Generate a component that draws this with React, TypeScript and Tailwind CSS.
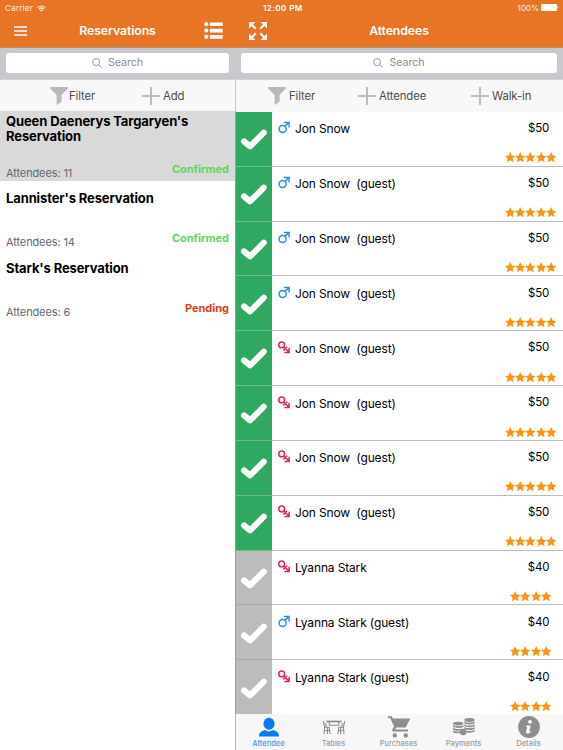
import React from 'react';

type Gender = 'male' | 'female';

interface Attendee {
  name: string;
  gender: Gender;
  price: string;
  stars: number;
  checkedIn: boolean;
}

interface Reservation {
  title: string;
  attendees: number;
  status: 'Confirmed' | 'Pending';
  selected?: boolean;
}

const reservations: Reservation[] = [
  {
    title: "Queen Daenerys Targaryen's Reservation",
    attendees: 11,
    status: 'Confirmed',
    selected: true,
  },
  { title: "Lannister's Reservation", attendees: 14, status: 'Confirmed' },
  { title: "Stark's Reservation", attendees: 6, status: 'Pending' },
];

const jon = (name: string, gender: Gender): Attendee => ({
  name,
  gender,
  price: '$50',
  stars: 5,
  checkedIn: true,
});

const lyanna = (name: string, gender: Gender): Attendee => ({
  name,
  gender,
  price: '$40',
  stars: 4,
  checkedIn: false,
});

const attendees: Attendee[] = [
  jon('Jon Snow', 'male'),
  jon('Jon Snow  (guest)', 'male'),
  jon('Jon Snow  (guest)', 'male'),
  jon('Jon Snow  (guest)', 'male'),
  jon('Jon Snow  (guest)', 'female'),
  jon('Jon Snow  (guest)', 'female'),
  jon('Jon Snow  (guest)', 'female'),
  jon('Jon Snow  (guest)', 'female'),
  lyanna('Lyanna Stark', 'female'),
  lyanna('Lyanna Stark (guest)', 'male'),
  lyanna('Lyanna Stark (guest)', 'female'),
];

const WifiIcon = () => (
  <svg className="h-[7px] w-[9px]" viewBox="0 0 18 14" fill="none" stroke="#fdeee2" strokeWidth="2.4">
    <path d="M1 5.2a11.5 11.5 0 0 1 16 0M4 8.4a7.2 7.2 0 0 1 10 0" />
    <path d="M6 10.6a4.4 4.4 0 0 1 6 0L9 13.6z" fill="#fdeee2" stroke="none" />
  </svg>
);

const ListIcon = () => (
  <svg className="h-[17px] w-[19px]" viewBox="0 0 19 17" fill="#fff">
    <circle cx="2.3" cy="2.2" r="2.1" />
    <circle cx="2.3" cy="8.5" r="2.1" />
    <circle cx="2.3" cy="14.8" r="2.1" />
    <path d="M5.8.4H18.7v3.7H5.8zM5.8 6.7H18.7v3.7H5.8zM5.8 13H18.7v3.7H5.8z" />
  </svg>
);

const ExpandIcon = () => (
  <svg className="h-[18px] w-[18px]" viewBox="0 0 18 18" fill="#fff" stroke="#fff" strokeWidth="2.1">
    <path d="M2 2l4.8 4.8M16 2l-4.8 4.8M2 16l4.8-4.8M16 16l-4.8-4.8" />
    <path stroke="none" d="M0 0h6.4L0 6.4zM18 0h-6.4L18 6.4zM0 18h6.4L0 11.6zM18 18h-6.4L18 11.6z" />
  </svg>
);

const FunnelIcon = () => (
  <svg className="h-[18px] w-[18px] shrink-0" viewBox="0 0 18 18" fill="#b9b9b9">
    <path d="M0 0h18v1.2L11.6 8v6.8L6.6 18V8L0 1.2z" />
  </svg>
);

const PlusIcon = () => (
  <svg className="h-[18px] w-[18px] shrink-0" viewBox="0 0 18 18" stroke="#bdbdbd" strokeWidth="2">
    <path d="M9 0v18M0 9h18" />
  </svg>
);

const CheckIcon = () => (
  <svg className="h-[21px] w-[28px]" viewBox="0 0 28 21" fill="none" stroke="#fff" strokeWidth="6" strokeLinejoin="round" strokeLinecap="round">
    <path d="M4 12.4l6 5L23.8 3.6" />
  </svg>
);

const GenderIcon = ({ gender }: { gender: Gender }) =>
  gender === 'male' ? (
    <svg className="h-[13px] w-[12px]" viewBox="0 0 12 13" fill="none" stroke="#2b90de" strokeWidth="1.5">
      <circle cx="4.6" cy="7.9" r="3.5" />
      <path d="M7 5.3l3.8-3.7M5.8 1.4h5.3v5" />
    </svg>
  ) : (
    <svg className="h-[13px] w-[12px]" viewBox="0 0 12 13" fill="none" stroke="#dc2463" strokeWidth="1.5">
      <circle cx="3.7" cy="3.9" r="2.9" />
      <path d="M5.8 6l5 5M11.1 6.8v4.7H6.4M9.1 5.7L5.4 9.4" />
    </svg>
  );

const Star = () => (
  <svg className="h-[11px] w-[10.4px]" viewBox="0 0 20 21" fill="#fd930f">
    <path d="M10 0l3 6.700 7.200.8-5.300 4.900 1.500 7.400L10 16l-6.400 3.800 1.500-7.400L-.2 7.500l7.200-.8z" />
  </svg>
);

const SearchBar = () => (
  <div className="h-8 border-b border-[#d4d3d8] bg-[#c9c8ce] px-[6px] pt-[5px]">
    <div className="flex h-[20px] items-center justify-center rounded-[3px] bg-white text-[10.8px] leading-none tracking-[-0.1px] text-[#8e8e93]">
      <svg className="mr-[6px] h-[10px] w-[10px]" viewBox="0 0 10 10" fill="none" stroke="#8e8e93" strokeWidth="0.9">
        <circle cx="4.1" cy="4.1" r="3.5" />
        <path d="M6.7 6.7l3 3" />
      </svg>
      <span className="pt-[1px]">Search</span>
    </div>
  </div>
);

interface ToolButtonProps {
  icon: React.ReactNode;
  label: string;
  className?: string;
}

const ToolButton = ({ icon, label, className = '' }: ToolButtonProps) => (
  <div className={`flex items-center ${className}`}>
    {icon}
    <span className="pt-[1px] whitespace-nowrap">{label}</span>
  </div>
);

const ReservationRow = ({ item }: { item: Reservation }) => (
  <div
    className={`flex h-[69.7px] flex-col justify-between px-[6px] ${
      item.selected ? 'bg-[#d9d9d9]' : 'bg-white'
    }`}
  >
    <div className="flex h-[34px] items-center pt-[2px]">
      <h2 className="text-[13px] leading-[15.5px] font-bold tracking-[-0.12px] text-black">{item.title}</h2>
    </div>
    <div className="flex items-start justify-between pb-[1px] leading-[14px]">
      <span className="pt-[4px] text-[11px] tracking-[-0.12px] text-[#686868]">Attendees: {item.attendees}</span>
      <span
        className={`text-[11px] font-bold tracking-[-0.02px] ${
          item.status === 'Confirmed' ? 'text-[#62d65b]' : 'text-[#dc3f1c]'
        }`}
      >
        {item.status}
      </span>
    </div>
  </div>
);

const AttendeeRow = ({ item }: { item: Attendee }) => (
  <div className="flex h-[54.85px] shrink-0 bg-white">
    <div
      className={`flex w-[36px] items-center justify-center border-b pt-[1.5px] ${
        item.checkedIn ? 'border-[#6cbb88] bg-[#2fa961]' : 'border-[#a8a8a8] bg-[#bcbcbc]'
      }`}
    >
      <CheckIcon />
    </div>
    <div className="flex flex-1 border-b border-[#bdbdbd] pl-[6px]">
      <div className="pt-[9.5px]">
        <GenderIcon gender={item.gender} />
      </div>
      <span className="pt-[9.5px] pl-[5px] text-[12px] leading-4 tracking-[-0.15px] whitespace-pre text-black">
        {item.name}
      </span>
      <div className="ml-auto flex w-[65px] flex-col items-center pt-[9.2px]">
        <span className="pl-[16px] text-[11.5px] leading-[15px] tracking-[-0.2px] text-black">{item.price}</span>
        <div className="mt-[16.3px] flex">
          {Array.from({ length: item.stars }, (_, i) => (
            <Star key={i} />
          ))}
        </div>
      </div>
    </div>
  </div>
);

const tabs = [
  {
    label: 'Attendee',
    icon: (
      <svg className="h-[22px] w-[24px]" viewBox="0 0 24 22" fill="#087cf8">
        <ellipse cx="12" cy="7.8" rx="5.6" ry="6" />
        <path d="M2 20.5c0-4 2.5-5.4 6-6.4 2.5 1.800 5.500 1.800 8 0 3.500 1 6 2.400 6 6.400z" />
      </svg>
    ),
  },
  {
    label: 'Tables',
    icon: (
      <svg className="h-[22px] w-[24px]" viewBox="0 0 24 22" fill="none" stroke="#8e8e8e" strokeWidth="1.1">
        <path d="M4.500 5.500h15" strokeWidth="1.700" />
        <path d="M7.300 6v3.200h9.400V6" />
        <path d="M1.300 5l1.300 6.300L2 18M3.600 7l.6 4M2.400 11.300h4.800l.8 6.700M5.400 11.500V18M3 14.500h4.500M22.700 5l-1.300 6.300L22 18M20.400 7l-.6 4M21.600 11.300h-4.800L16 18M18.600 11.500V18M21 14.500h-4.500" />
      </svg>
    ),
  },
  {
    label: 'Purchases',
    icon: (
      <svg className="h-[22px] w-[24px]" viewBox="0 0 24 22" fill="#8e8e8e">
        <path d="M.8.2h4l1 2.300h17.500l-4.600 8.900H9.300l-1.200 2.200h13v2H5.800l-.8-1.700 2-3.500L3.300 2.200H.8z" />
        <circle cx="7.800" cy="19.400" r="2.200" />
        <circle cx="18.800" cy="19.400" r="2.200" />
      </svg>
    ),
  },
  {
    label: 'Payments',
    icon: (
      <svg className="h-[22px] w-[24px]" viewBox="0 0 24 22" fill="#8e8e8e">
        <ellipse cx="17.500" cy="4" rx="5.200" ry="1.900" />
        <path d="M12.300 5.500c2 1.600 8.400 1.600 10.400 0v1.700c-2 1.600-8.400 1.600-10.400 0zM12.300 8.300c2 1.600 8.400 1.600 10.400 0V10c-2 1.600-8.400 1.600-10.400 0zM12.300 11.100c2 1.600 8.400 1.600 10.400 0v1.700c-2 1.600-8.400 1.600-10.400 0zM14.500 14.700c2.500.6 6.400.3 8.200-.8v1.700c-1.800 1.200-5.700 1.400-8.200.8z" />
        <ellipse cx="6.200" cy="7.600" rx="5.200" ry="1.800" />
        <path d="M1 9c2 1.600 8.400 1.600 10.400 0v1.700c-2 1.600-8.400 1.600-10.400 0zM1 11.700c2 1.600 6.400 1.600 8.400.7v1.700C7 15 3 15 1 13.400zM1 14.500c2 1.300 5 1.300 7 .8v1.700c-2 .5-5 .5-7-.8z" />
        <circle cx="11.200" cy="16" r="3.300" />
      </svg>
    ),
  },
  {
    label: 'Details',
    icon: (
      <svg className="h-[22px] w-[24px]" viewBox="0 0 24 22">
        <circle cx="12" cy="11" r="10.900" fill="#8e8e8e" />
        <circle cx="13" cy="5.800" r="1.900" fill="#fff" />
        <path d="M9.300 9.400h4.500l-1.500 6c-.2 1 .7.600 1.800-.4l.5.600c-2.500 2.700-6.200 2.700-5.500-.2l1.100-4.500H9z" fill="#fff" />
      </svg>
    ),
  },
];

const TabBar = () => (
  <nav className="grid h-9 grid-cols-5 bg-[#f7f7f7] pr-[2px] text-[7.5px] leading-none font-medium">
    {tabs.map((tab, i) => (
      <div
        key={tab.label}
        className={`flex flex-col items-center pt-[1.5px] ${i === 0 ? 'text-[#4298f0]' : 'text-[#9a9a9a]'}`}
      >
        {tab.icon}
        <span className="pt-[2px]">{tab.label}</span>
      </div>
    ))}
  </nav>
);

export default function App() {
  return (
    <div className="flex h-[750px] w-[563px] overflow-hidden bg-white font-['Inter',sans-serif]">
      <section className="flex w-[235px] shrink-0 flex-col">
        <header className="h-12 border-b border-[#b58d77] bg-[#e87425] text-white">
          <div className="flex h-[16px] items-center gap-[4px] pl-[5px] text-[8.2px] leading-none tracking-[0.15px] text-[#fdeee2]">
            Carrier
            <WifiIcon />
          </div>
          <div className="flex h-[29px] items-center justify-between pr-[12px] pl-[14px]">
            <svg className="h-[10px] w-[19px]" viewBox="0 0 19 10" stroke="#fff" strokeWidth="1.3">
              <path d="M0 1h13M0 5h13M0 9h13" />
            </svg>
            <h1 className="pt-[2px] pr-[2px] text-[12.3px] leading-none font-semibold tracking-[-0.1px]">
              Reservations
            </h1>
            <ListIcon />
          </div>
        </header>
        <SearchBar />
        <div className="flex h-[31px] bg-[#f8f8f8] pl-[50px] text-[11.3px] tracking-[-0.1px] text-[#4c4c4c]">
          <ToolButton className="w-[92px] gap-[1px]" icon={<FunnelIcon />} label="Filter" />
          <ToolButton className="gap-[3px]" icon={<PlusIcon />} label="Add" />
        </div>
        {reservations.map((item) => (
          <ReservationRow key={item.title} item={item} />
        ))}
      </section>

      <section className="flex w-[328px] flex-col">
        <header className="h-12 border-b border-l border-b-[#b58d77] border-l-[#d27a45] bg-[#e87425] text-white">
          <div className="flex h-[16px] items-center justify-between pr-[4px] pl-[27px] text-[8.2px] leading-none">
            <span className="font-semibold tracking-[0.35px]">12:00 PM</span>
            <span className="flex items-center gap-[2px] text-[#fdeee2]">
              100%
              <svg className="h-[7px] w-[18px]" viewBox="0 0 18 7" fill="#fff">
                <rect width="16" height="7" rx="1" />
                <path d="M16.5 2.2c1.2.3 1.2 2.3 0 2.6z" />
              </svg>
            </span>
          </div>
          <div className="grid h-[29px] grid-cols-[1fr_auto_1fr] items-center pr-[14px] pl-[13px]">
            <ExpandIcon />
            <h1 className="pt-[2px] text-[12.3px] leading-none font-semibold tracking-[-0.1px]">Attendees</h1>
          </div>
        </header>
        <SearchBar />
        <div className="flex h-[31px] border-l border-[#c8c8c8] bg-[#f8f8f8] pl-[32px] text-[11.3px] tracking-[-0.1px] text-[#4c4c4c]">
          <ToolButton className="w-[90px] gap-[3px]" icon={<FunnelIcon />} label="Filter" />
          <ToolButton className="w-[113px] gap-[3px]" icon={<PlusIcon />} label="Attendee" />
          <ToolButton className="gap-[3px]" icon={<PlusIcon />} label="Walk-in" />
        </div>
        <div className="h-[603px] shrink-0 overflow-hidden border-l border-[#9e9e9e] bg-[#f8f8f8] pt-[0.9px]">
          {attendees.map((item, i) => (
            <AttendeeRow key={i} item={item} />
          ))}
        </div>
        <div className="border-l border-[#b5b5b5]">
          <TabBar />
        </div>
      </section>
    </div>
  );
}
